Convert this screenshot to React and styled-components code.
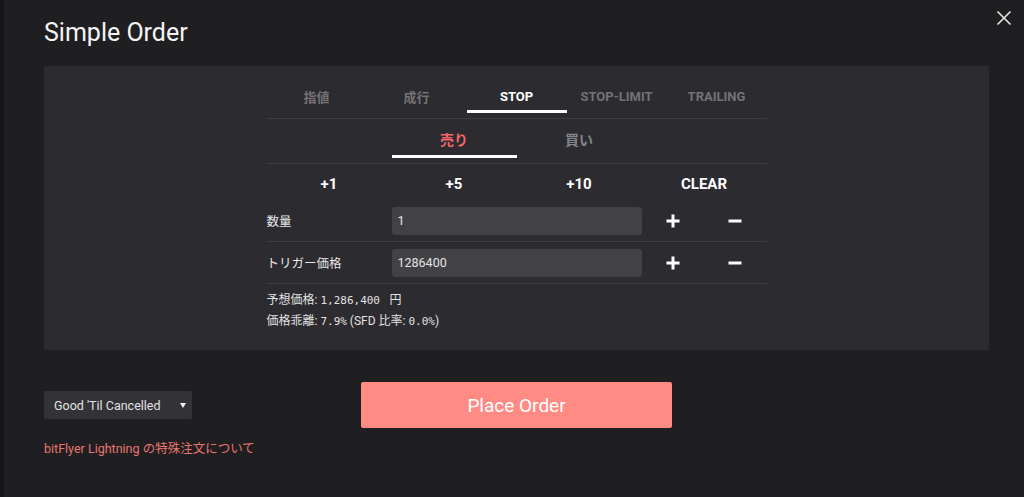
import React from 'react';
import styled, { createGlobalStyle } from 'styled-components';

const GlobalStyle = createGlobalStyle`
  body {
    margin: 0;
    background: #1f1f21;
    font-family: Roboto, "Noto Sans CJK JP", sans-serif;
    color: #e8e8e8;
  }
`;

const Page = styled.div`
  position: relative;
  min-height: 497px;
  box-sizing: border-box;
  border-left: 4px solid #161618;
  padding: 0 35px 0 40px;
`;

const Close = styled.button`
  position: absolute;
  top: 10px;
  right: 12px;
  width: 16px;
  height: 16px;
  padding: 0;
  border: none;
  background: none;
  cursor: pointer;
`;

const Header = styled.div`
  height: 66px;
  box-sizing: border-box;
  padding-top: 18px;
`;

const Title = styled.h1`
  margin: 0;
  font-size: 25px;
  line-height: 29px;
  font-weight: 400;
  color: #f4f4f4;
`;

const Panel = styled.section`
  background: #2c2b30;
  padding: 16px 0 18px;
  display: flex;
  justify-content: center;
`;

const Inner = styled.div`
  width: 500px;
`;

const TabBar = styled.div`
  display: grid;
  grid-template-columns: repeat(5, 1fr);
  padding-bottom: 5px;
  border-bottom: 1px solid #3e3d42;
`;

const Tab = styled.div`
  height: 31px;
  box-sizing: border-box;
  display: flex;
  align-items: center;
  justify-content: center;
  font-size: 13px;
  font-weight: 700;
  color: ${(p) => (p.$active ? '#ffffff' : '#737277')};
  border-bottom: 3px solid ${(p) => (p.$active ? '#ffffff' : 'transparent')};
`;

const SideBar = styled.div`
  display: flex;
  justify-content: center;
  padding-bottom: 5px;
  border-bottom: 1px solid #3e3d42;
`;

const Side = styled.div`
  width: 125px;
  height: 39px;
  box-sizing: border-box;
  padding-top: 3px;
  display: flex;
  align-items: center;
  justify-content: center;
  font-size: 14px;
  font-weight: 700;
  color: ${(p) => (p.$active ? '#f0666a' : '#858489')};
  border-bottom: 3px solid ${(p) => (p.$active ? '#ffffff' : 'transparent')};
`;

const QuickRow = styled.div`
  display: grid;
  grid-template-columns: repeat(4, 1fr);
  height: 36px;
  box-sizing: border-box;
  padding-top: 4px;
  align-items: center;
`;

const Quick = styled.span`
  text-align: center;
  font-size: 15px;
  font-weight: 700;
  color: #ffffff;
`;

const FieldRow = styled.div`
  display: grid;
  grid-template-columns: 125px 250px 62.5px 62.5px;
  align-items: center;
  height: 42px;
  box-sizing: border-box;
  border-bottom: 1px solid #3e3d42;
`;

const Label = styled.span`
  font-size: 12.5px;
  color: #e6e6e6;
`;

const Input = styled.input`
  height: 28px;
  box-sizing: border-box;
  border: none;
  border-radius: 3px;
  background: #424146;
  color: #e4e4e4;
  padding: 0 6px;
  font-family: Roboto, sans-serif;
  font-size: 12.5px;
  outline: none;
`;

const Step = styled.button`
  display: flex;
  justify-content: center;
  align-items: center;
  border: none;
  background: none;
  padding: 0;
  height: 28px;
  cursor: pointer;
`;

const Info = styled.div`
  padding-top: 6px;
  font-size: 12px;
  line-height: 21px;
  color: #e2e2e2;
`;

const Mono = styled.span`
  font-family: "DejaVu Sans Mono", monospace;
  font-size: 11px;
  white-space: pre;
`;

const Footer = styled.div`
  display: grid;
  grid-template-columns: 1fr 311px 1fr;
  margin-top: 32px;
`;

const Left = styled.div`
  padding-top: 9px;
`;

const Select = styled.div`
  width: 148px;
  height: 28px;
  box-sizing: border-box;
  display: flex;
  align-items: center;
  justify-content: space-between;
  padding: 0 6px 0 10px;
  background: #333237;
  border-radius: 2px;
  font-size: 12.5px;
  color: #e2e2e2;
`;

const Caret = styled.span`
  width: 0;
  height: 0;
  border-left: 3px solid transparent;
  border-right: 3px solid transparent;
  border-top: 5px solid #f2f2f2;
`;

const Link = styled.a`
  display: block;
  margin-top: 19px;
  font-size: 12.5px;
  color: #ea7571;
  text-decoration: none;
`;

const PlaceButton = styled.button`
  height: 46px;
  border: none;
  border-radius: 2px;
  background: #ff8b84;
  color: #ffffff;
  font-family: Roboto, sans-serif;
  font-size: 19px;
  cursor: pointer;
`;

const Plus = () => (
  <svg width="14" height="14" viewBox="0 0 14 14">
    <path d="M7 0.5v13M0.5 7h13" stroke="#fff" strokeWidth="3" />
  </svg>
);

const Minus = () => (
  <svg width="14" height="14" viewBox="0 0 14 14">
    <path d="M0.5 7h13" stroke="#fff" strokeWidth="3" />
  </svg>
);

const tabs = ['指値', '成行', 'STOP', 'STOP-LIMIT', 'TRAILING'];

const fields = [
  { label: '数量', value: '1' },
  { label: 'トリガー価格', value: '1286400' },
];

const App = () => (
  <>
    <GlobalStyle />
    <Page>
      <Close aria-label="close">
        <svg width="16" height="16" viewBox="0 0 16 16">
          <path d="M1.5 1.5l13 13M14.5 1.5l-13 13" stroke="#e6e6e6" strokeWidth="1.6" />
        </svg>
      </Close>
      <Header>
        <Title>Simple Order</Title>
      </Header>

      <Panel>
        <Inner>
          <TabBar>
            {tabs.map((t) => (
              <Tab key={t} $active={t === 'STOP'}>{t}</Tab>
            ))}
          </TabBar>
          <SideBar>
            <Side $active>売り</Side>
            <Side>買い</Side>
          </SideBar>
          <QuickRow>
            <Quick>+1</Quick>
            <Quick>+5</Quick>
            <Quick>+10</Quick>
            <Quick>CLEAR</Quick>
          </QuickRow>
          {fields.map((f) => (
            <FieldRow key={f.label}>
              <Label>{f.label}</Label>
              <Input defaultValue={f.value} />
              <Step><Plus /></Step>
              <Step><Minus /></Step>
            </FieldRow>
          ))}
          <Info>
            <div>予想価格: <Mono>1,286,400 </Mono> 円</div>
            <div>価格乖離: <Mono>7.9%</Mono> (SFD 比率: <Mono>0.0%</Mono>)</div>
          </Info>
        </Inner>
      </Panel>

      <Footer>
        <Left>
          <Select>
            Good 'Til Cancelled
            <Caret />
          </Select>
          <Link href="#">bitFlyer Lightning の特殊注文について</Link>
        </Left>
        <PlaceButton>Place Order</PlaceButton>
      </Footer>
    </Page>
  </>
);

export default App;
